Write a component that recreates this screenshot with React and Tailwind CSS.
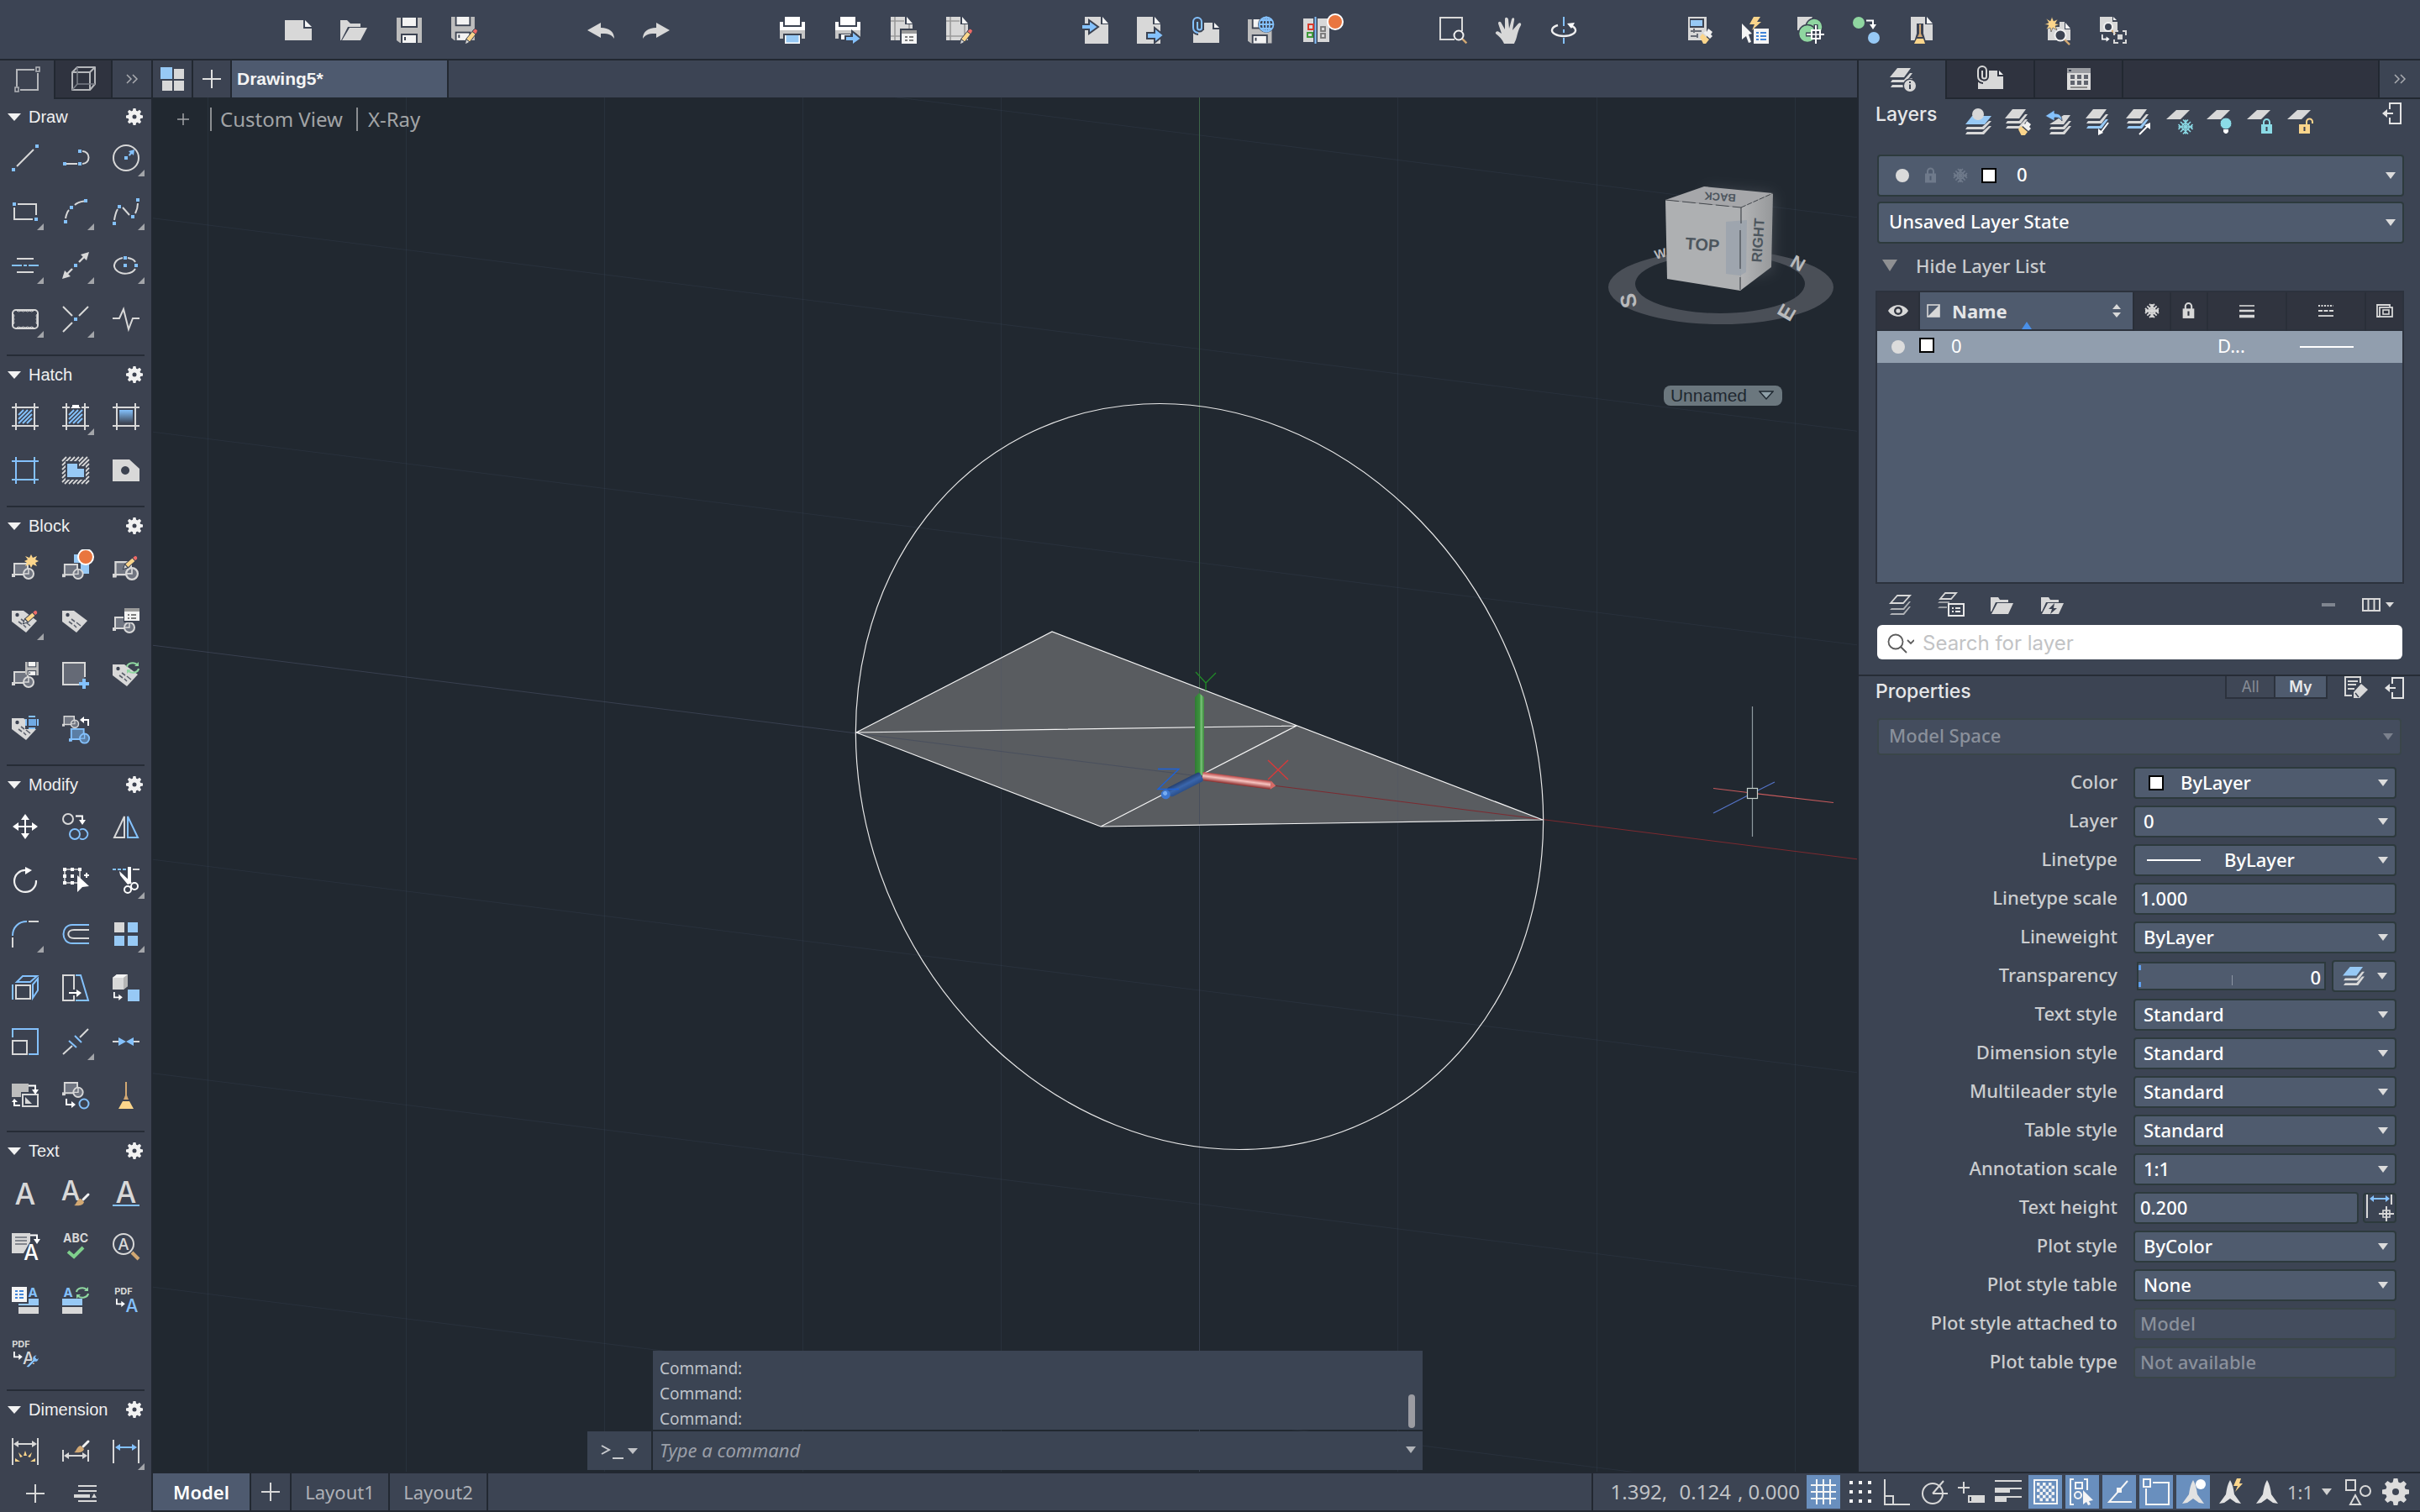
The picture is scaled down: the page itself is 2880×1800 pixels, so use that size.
import React from "react";

const G = "#d8d8d8";
const B = "#84c1fc";
const F = "#97c9f5";
const Y = "#fbd58b";
const P = "#3c4352";
const T = "#8bdbe6";
const GR = "#8fd6a0";

const sans = "font-['Noto_Sans','Open_Sans',sans-serif]";
const helv = "font-['Liberation_Sans',Arial,sans-serif]";
const inter = "font-['Inter',sans-serif]";

/* ---------- shared glyph parts ---------- */

function Svg({ size = "size-8", box = "0 0 32 32", children }) {
  return (
    <svg viewBox={box} className={`${size} shrink-0`} fill="none" aria-hidden="true">
      {children}
    </svg>
  );
}

function Gear({ size = "size-5", color = "#f2f2f2" }) {
  return (
    <svg viewBox="-12 -12 24 24" className={`${size} shrink-0`} aria-hidden="true">
      <circle r="6" fill="none" stroke={color} strokeWidth="6" />
      {[0, 45, 90, 135, 180, 225, 270, 315].map((a) => (
        <path key={a} d="M-2.6 -8L-1.8 -12H1.8L2.6 -8Z" fill={color} transform={`rotate(${a})`} />
      ))}
    </svg>
  );
}

function Caret({ className = "w-3 h-2", color = "#dcdcdc" }) {
  return (
    <svg viewBox="0 0 12 8" preserveAspectRatio="none" className={`${className} shrink-0`} aria-hidden="true">
      <path d="M0 0H12L6 8Z" fill={color} />
    </svg>
  );
}

const Pencil = ({ x = 0, y = 0, a = 0 }) => (
  <g transform={`translate(${x} ${y}) rotate(${a})`} stroke={P} strokeWidth="1">
    <path d="M9 2.5L11 0a2.6 2.6 0 0 1 4 3.2L13 6Z" fill="#ee6a66" />
    <path d="M9 2.5L13.2 5.8L6 15L1.6 11.6Z" fill={Y} />
    <path d="M1.6 11.6L6 15L0.5 18Z" fill={G} />
  </g>
);

const Brush = ({ x = 0, y = 0 }) => (
  <g transform={`translate(${x} ${y})`}>
    <path d="M10 0L15 4L13 7L15 9L12 12L4 5L7 3L8 4Z" fill="#f0f0f0" />
    <path d="M3 6L11 13L7 18L4 18L0 10Z" fill={Y} />
  </g>
);

const Tip = ({ x = 0, y = 0 }) => (
  <g transform={`translate(${x} ${y})`}>
    <path d="M17 0L11 6" stroke="#f2f2f2" strokeWidth="3" strokeLinecap="round" />
    <path d="M8 5L12 9C11 13 6 14 0 13C3 12 3 6 8 5Z" fill="#d2a873" />
  </g>
);

const Doc = ({ x = 0, y = 0, w = 28, h = 28 }) => (
  <g transform={`translate(${x} ${y})`}>
    <path d={`M0 0H${w - 9}V9H${w}V${h}H0Z`} fill={G} />
    <path d={`M${w - 7} 0L${w} 8H${w - 7}Z`} fill="#f5f5f5" />
  </g>
);

const Block = ({ x = 0, y = 0, c = G, f = "#707581", s = 1 }) => (
  <g transform={`translate(${x} ${y}) scale(${s})`} stroke={c} strokeWidth="2">
    <path d="M3 16V1H19V14H3" fill={f} />
    <rect x="0" y="13" width="4" height="4" fill={c} stroke="none" />
    <circle cx="20" cy="13" r="6" fill={f} />
    <path d="M20 7V13H14" strokeWidth="1.5" />
  </g>
);

const Tag = () => (
  <g>
    <path d="M0 3H14L30 15L17 29L0 16Z" fill={G} />
    <circle cx="6.500" cy="8" r="2.200" fill={P} />
    <path d="M11 13L15 16M17 17L22 21M8 16L12 19M14 20L17 23" stroke="#5a5f6b" strokeWidth="1.6" />
  </g>
);

const Cycle = ({ x = 0, y = 0 }) => (
  <g transform={`translate(${x} ${y})`} stroke={GR} strokeWidth="2.2">
    <path d="M1 6A7 5.500 0 0 1 13 3M15 8A7 5.500 0 0 1 3 11" />
    <path d="M15 0V5H10ZM1 14V9H6Z" fill={GR} stroke="none" />
  </g>
);

const Clip = ({ c = B, bg = P }) => (
  <g>
    <path d="M6 6V13a2.500 2.500 0 0 0 5 0V6a5 5 0 0 0-10 0V13a6 6 0 0 0 6 6" stroke={bg} strokeWidth="6" />
    <path d="M6 6V13a2.500 2.500 0 0 0 5 0V6a5 5 0 0 0-10 0V13a6 6 0 0 0 6 6" stroke={c} strokeWidth="2" />
  </g>
);

const Stack = ({ c2 = G, c3 = G, top = G, x = 0, y = 0 }) => (
  <g transform={`translate(${x} ${y})`}>
    <path d="M9 0H25L17 11H0Z" fill={top} />
    <path d="M24 6H27L19 17H1L3 14H17Z" fill={c2} />
    <path d="M24 12H27L19 23H1L3 20H17Z" fill={c3} />
  </g>
);

const Flake = ({ x, y, r = 8, c = T, w = 1.6 }) => (
  <g transform={`translate(${x} ${y})`} stroke={c} strokeWidth={w}>
    {[0, 90].map((a) => (
      <path key={a} d={`M0 ${-r}V${r}M-3 ${-r}L0 ${3 - r}L3 ${-r}M-3 ${r}L0 ${r - 3}L3 ${r}`} transform={`rotate(${a})`} />
    ))}
    {[45, 135].map((a) => (
      <path key={a} d={`M0 ${-r}V${r}`} transform={`rotate(${a})`} />
    ))}
    <circle r={r * 0.5} />
  </g>
);

const Lock = ({ x, y, c = T, open = false, k = P }) => (
  <g transform={`translate(${x} ${y})`}>
    <path d={open ? "M9 8V4a3.500 3.500 0 0 1 7 0V6" : "M3 8V4.500a3.500 3.500 0 0 1 7 0V8"} stroke={c} strokeWidth="2" />
    <rect x="0" y="7" width="13" height="11" fill={c} />
    <path d="M6.500 10V15" stroke={k} strokeWidth="2" />
  </g>
);

const Hatched = ({ c = B }) => (
  <path d="M8 14L14 8M8 19L19 8M8 24L24 8M13 24L24 13M18 24L24 18" stroke={c} strokeWidth="2" />
);

const Frame = ({ c = G, cut = false }) => (
  <path d={cut ? "M5 0V32M27 0V32M0 5H9M23 5H32M0 27H32" : "M5 0V32M27 0V32M0 5H32M0 27H32"} stroke={c} strokeWidth="2" />
);

const Sq = ({ p, s = 4, c = B }) => p.map(([x, y]) => <rect key={`${x}-${y}`} x={x - s / 2} y={y - s / 2} width={s} height={s} fill={c} />);

const Hook = ({ x = 0, y = 0, s = 1 }) => (
  <g transform={`translate(${x} ${y}) scale(${s})`}>
    <path d="M1 0V7H8" stroke="#fff" strokeWidth="2" />
    <path d="M7 3L12 7L7 11Z" fill="#fff" />
  </g>
);

const HookR = ({ x = 0, y = 0 }) => (
  <g transform={`translate(${x} ${y})`}>
    <path d="M0 1.500H8V7" stroke="#fff" strokeWidth="2" />
    <path d="M4 6H12L8 12Z" fill="#fff" />
  </g>
);

const Letter = ({ x, y, size = 24, c = G, bold = false, children }) => (
  <text x={x} y={y} fontSize={size} fill={c} fontWeight={bold ? 700 : 500} fontFamily="Inter, sans-serif" textAnchor="middle">
    {children}
  </text>
);

const Floppy = ({ x = 0, y = 0, s = 1 }) => (
  <g transform={`translate(${x} ${y}) scale(${s})`}>
    <path d="M0 0H30V30H4L0 27Z" fill="#bdbdbd" />
    <rect x="5" y="0" width="20" height="12" fill={P} />
    <rect x="7" y="0" width="16" height="10" fill="#f3f3f3" />
    <path d="M5 19H25V30H5Z" fill={P} />
    <rect x="7" y="21" width="16" height="9" fill="#f3f3f3" />
    <rect x="9" y="23" width="2" height="4" fill={P} />
  </g>
);

const Printer = () => (
  <g>
    <path d="M1 6H31V26H1Z" fill="#c6c6c6" />
    <path d="M1 6H31V16H1Z" fill="#fff" />
    <path d="M5 0H27V12H5Z" fill={P} />
    <path d="M7 0H25V10H7Z" fill="#fff" />
    <path d="M5 20H27V27H5Z" fill={P} />
  </g>
);

const Plot = () => (
  <g>
    <Doc x={1} y={0} w={26} />
    <path d="M1 5H17M1 23H27M6 0V28M23 9V28" stroke="#9a9a9a" strokeWidth="1.600" />
  </g>
);

const Glass = ({ x, y, r = 6 }) => (
  <g transform={`translate(${x} ${y})`}>
    <path d={`M${r * 0.7} ${r * 0.7}L${r * 1.7} ${r * 1.7}`} stroke="#d2a873" strokeWidth="2.400" />
    <circle r={r} fill={P} stroke="#f2f2f2" strokeWidth="2" />
  </g>
);

const Badge = ({ x, y, r = 9 }) => <circle cx={x} cy={y} r={r} fill="#e9763f" stroke="#fff" strokeWidth="2" />;

/* ---------- top toolbar ---------- */

const TOP = [
  [
    ["New", <g><path d="M0 4H22V14H32V28H0Z" fill={G} /><path d="M24 4L32 12H24Z" fill="#f5f5f5" /></g>],
    ["Open", <g><path d="M0 4H8L12 8H24V12H9L1 28H0Z" fill={G} /><path d="M11 13H32L24 28H2Z" fill={G} /></g>],
    ["Save", <Floppy x={1} y={1} />],
    ["Save As", <g><Floppy x={0} y={0} s={0.93} /><Pencil x={16} y={15} /></g>],
  ],
  [
    ["Undo", <path d="M0 16L16 7V13C26 13 32 18 32 26C28 20 23 20 16 20V25Z" fill={G} />],
    ["Redo", <path d="M32 16L16 7V13C6 13 0 18 0 26C4 20 9 20 16 20V25Z" fill={G} />],
  ],
  [
    ["Plot", <g><Printer /><rect x="7" y="22" width="18" height="10" fill="#fff" /><rect x="8.500" y="22" width="15" height="8.500" fill={F} /></g>],
    ["Batch Publish", <g><Printer /><path d="M8 21H19V27H8Z" fill="#fff" /><path d="M13 23H21V17L32 26L21 34V29H13Z" fill={B} stroke={P} strokeWidth="2" /></g>],
    ["Page Setup", <g><Plot /><rect x="12" y="14" width="20" height="18" fill={P} /><rect x="14" y="16" width="18" height="16" fill="#f5f5f5" /><rect x="14" y="16" width="18" height="4" fill="#9a9a9a" /><path d="M18 24H21M23 24H28M18 28H21M23 28H28" stroke="#555" strokeWidth="1.600" /></g>],
    ["Plot Styles", <g><Plot /><Pencil x={17} y={15} /></g>],
  ],
  [
    ["Import", <g><Doc x={4} y={0} h={32} /><path d="M0 9H9V4L20 12L9 20V15H0Z" fill={B} stroke={P} strokeWidth="2" /></g>],
    ["Export", <g><Doc x={0} y={0} h={32} /><path d="M12 19H21V13L32 22L21 31V26H12Z" fill={B} stroke={P} strokeWidth="2" /></g>],
    ["Attach", <g><path d="M1 16H14V7H24V15H32V31H1Z" fill={G} /><path d="M26 7L32 13H26Z" fill="#f5f5f5" /><Clip /></g>],
    ["Web Save", <g><Floppy x={0} y={3} s={0.95} /><circle cx="22" cy="9" r="10" fill={P} /><g stroke={B} strokeWidth="1.800"><circle cx="22" cy="9" r="8.500" /><ellipse cx="22" cy="9" rx="4" ry="8.500" /><path d="M22 0V18M13 9H31M15 4H29M15 14H29" /></g></g>],
    ["Compare", <g><path d="M0 2H12V30H0ZM17 2H31V30H17Z" fill={G} /><path d="M14.500 0V32" stroke={B} strokeWidth="2" /><rect x="6" y="9" width="6" height="6" stroke="#d93a2b" strokeWidth="2" /><rect x="5" y="19" width="6" height="5" stroke="#3e9a3a" strokeWidth="2" /><rect x="21" y="12" width="5" height="5" stroke="#777" strokeWidth="1.800" /><rect x="21" y="20" width="5" height="5" stroke="#777" strokeWidth="1.800" /><Badge x={38} y={6} r={9} /></g>],
  ],
  [
    ["Zoom Window", <g><path d="M18 27H1V1H27V17" stroke={G} strokeWidth="2" /><Glass x={23} y={22} r={5.5} /></g>],
    ["Pan", <path d="M11 32C9 27 5 23 1 20C0 18 3 16 5 18L8 20L4 8C4 5 7 5 8 8L12 15V3C12 0 15 0 16 3L17 14L20 3C21 0 24 1 23 4L21 16L28 8C30 6 32 8 31 10C28 15 27 20 26 24C25 28 24 29 23 32Z" fill={G} />],
    ["Orbit", <g><path d="M16 0V11M16 15V19M16 25V32" stroke={B} strokeWidth="2" /><path d="M9 10A14 7 0 1 0 23 10" stroke="#f0f0f0" strokeWidth="2.400" /><path d="M20 8L29 7L25 14Z" fill="#fff" /></g>],
  ],
  [
    ["Quick Properties", <g><rect x="2" y="0" width="22" height="28" fill={G} /><rect x="4" y="2" width="17" height="11" fill={P} /><rect x="5" y="4" width="14" height="7" fill={F} /><path d="M5 17H18M5 23H14M9 14V19M13 20V25" stroke="#666b76" strokeWidth="2" /><Brush x={16} y={14} /></g>],
    ["Action Recorder", <g><path d="M14 0H22L18 6H23L12 16L15 9H9Z" fill={Y} /><path d="M0 8L12 20L8 21L11 30L8 31L5 23L0 27Z" fill="#f5f5f5" /><rect x="14" y="14" width="18" height="18" fill="#f5f5f5" /><path d="M17 19H20M22 19H29M17 23H20M22 23H29M17 27H20M22 27H29" stroke="#4285d9" strokeWidth="2" /></g>],
    ["Point Style", <g><path d="M0 0H18L10 16H0Z" fill={G} /><circle cx="20" cy="12" r="10" fill={GR} stroke={P} strokeWidth="1.500" /><circle cx="12" cy="20" r="10.500" fill={GR} stroke={P} strokeWidth="1.500" /><path d="M22 9V32M10 21H32" stroke={P} strokeWidth="5" /><path d="M22 10V32M11 21H32" stroke="#fff" strokeWidth="2" /><rect x="17" y="16" width="10" height="10" fill={P} stroke="#fff" strokeWidth="2" /><path d="M22 16V27M16 21H28" stroke="#fff" strokeWidth="1.600" /></g>],
    ["Match", <g><circle cx="7" cy="7" r="7" fill={GR} /><HookR x={16} y={3} /><circle cx="25" cy="25" r="7" fill={F} /></g>],
    ["Clean", <g><Doc x={3} y={0} w={26} /><path d="M10 8V20L6 33H22L18 20V8Z" fill={P} /><path d="M13 9H15V20L17 24H11L13 20Z" fill="#d2a873" /><path d="M10 26H18L20 32H7Z" fill={Y} /></g>],
  ],
  [
    ["Find New", <g><path d="M4 12H18V6H24V15H31V28H4Z" fill={G} /><path d="M25 7L31 14H25Z" fill="#f5f5f5" /><Glass x={19} y={22} r={6.5} /><path d="M9 0L11 5L16 3L13 8L18 9L13 11L15 16L10 13L8 18L7 13L2 15L5 10L0 9L5 7L2 2L7 5Z" fill={Y} stroke={P} strokeWidth="0.600" /></g>],
    ["Find Replace", <g><path d="M0 0H15V6H21V18H0Z" fill={G} /><path d="M16 0L20 4H16Z" fill="#f5f5f5" /><Glass x={10} y={12} r={5} /><Hook x={2} y={21} s={0.8} /><path d="M17 22V17H22M27 17H31V22M31 27V31H27M22 31H17V27" stroke={G} strokeWidth="2" /><rect x="21" y="21" width="6" height="6" fill={G} /></g>],
  ],
];

/* ---------- left palette ---------- */

const LEFT = [
  {
    title: "Draw",
    items: [
      ["Line", <g><path d="M6 26L26 6" stroke={G} strokeWidth="2" /><Sq p={[[2, 30], [30, 2]]} /></g>],
      ["Polyline", <g><path d="M5 23H18M24 8C34 8 34 23 24 23" stroke={G} strokeWidth="2" /><Sq p={[[3, 23], [21, 23], [21, 8]]} /></g>],
      ["Circle", <g><circle cx="16" cy="16" r="15" stroke={G} strokeWidth="2" /><Sq p={[[16, 16]]} /><path d="M26 6L25 13L23 11L20 14L19 12L21 10L19 8Z" fill={B} /></g>, 1],
      ["Rectangle", <g><path d="M7 7H29V20M25 25H3V11" stroke={G} strokeWidth="2" /><Sq p={[[3, 7], [29, 25]]} /></g>, 1],
      ["Arc", <g><path d="M4 24C5 19 6 16 8 14M15 8C18 5 22 4 26 3.500" stroke={G} strokeWidth="2" /><Sq p={[[4, 28], [11, 11], [28, 3]]} /></g>, 1],
      ["Spline", <g><path d="M2 26C3 20 4 16 6 13M12 11L20 20M27 18C29 14 30 10 30 6" stroke={G} strokeWidth="2" /><Sq p={[[2, 30], [8, 10], [24, 22], [30, 2]]} /></g>, 1],
      ["Construction Lines", <g><path d="M6 8H26M6 24H26" stroke={G} strokeWidth="2" /><path d="M0 16H12M14 16H18M20 16H32" stroke={B} strokeWidth="2" /></g>, 1],
      ["Ray", <g><path d="M5 27L12 20M20 12L27 5" stroke={G} strokeWidth="2.400" /><path d="M0 32L3 22L10 29ZM32 0L22 3L29 10Z" fill={G} /><Sq p={[[16, 16]]} /></g>, 1],
      ["Ellipse", <g><path d="M12 7A13 9.500 0 1 0 27 20M18 7Q25 8 27 12" stroke={G} strokeWidth="2" /><Sq p={[[15, 7], [15, 16], [28, 16]]} /></g>, 1],
      ["Revision Cloud", <g><rect x="1" y="5" width="30" height="22" rx="4" stroke={G} strokeWidth="2" /><path d="M6 6q2 2 5 0q3 2 5 0q3 2 5 0q3 2 5 0M6 26q2-2 5 0q3-2 5 0q3-2 5 0q3-2 5 0M2 10q2 2 0 4q2 2 0 4q2 2 0 4M30 10q-2 2 0 4q-2 2 0 4q-2 2 0 4" stroke={G} strokeWidth="1" /></g>, 1],
      ["Break Lines", <g><path d="M1 1L12 12M20 12L31 1M1 31L12 20" stroke={G} strokeWidth="2" /><Sq p={[[16, 16]]} /></g>, 1],
      ["Break Symbol", <path d="M0 15H8L13 4L19 28L24 15H32" stroke={G} strokeWidth="2" />],
    ],
  },
  {
    title: "Hatch",
    items: [
      ["Hatch", <g><Frame /><Hatched /></g>],
      ["Super Hatch", <g><Frame cut /><Hatched /><path d="M10 6L12 4V2H20V4L22 6Z" fill="#fff" /></g>, 1],
      ["Gradient", <g><defs><linearGradient id="fade" x1="0" y1="0" x2="0" y2="1"><stop offset="0" stopColor={B} /><stop offset="1" stopColor={P} /></linearGradient></defs><Frame /><rect x="8" y="8" width="16" height="16" fill="url(#fade)" /></g>],
      ["Boundary", <Frame c={B} />],
      ["Region", <g><path d="M0 5L5 0M0 10L10 0M0 15L15 0M0 20L20 0M0 25L25 0M0 30L30 0M3 32L32 3M8 32L32 8M13 32L32 13M18 32L32 18M23 32L32 23M28 32L32 28" stroke={G} strokeWidth="1.800" /><path d="M4 5H20V11H28V27H4Z" fill={P} /><path d="M6 8H18V14H26V24H6Z" fill={F} /></g>],
      ["Wipeout", <path fillRule="evenodd" d="M0 3H20L32 14V29H0ZM15 11a5 5 0 1 0 0.100 0Z" fill={G} />],
    ],
  },
  {
    title: "Block",
    items: [
      ["Create Block", <g><Block x={0} y={10} /><path d="M23 0L25 4L30 2L28 6L32 8L28 10L30 14L25 12L23 16L21 12L16 14L18 10L15 8L19 6L16 2L21 4Z" fill={Y} /></g>],
      ["Insert Block", <g><path d="M14 0H24V8H32V23H22V10H14Z" fill={F} /><Block x={0} y={11} s={0.95} /><Badge x={28} y={3} r={9} /></g>],
      ["Edit Block", <g><Block x={0} y={8} s={1.15} /><Pencil x={15} y={0} a={10} /></g>],
      ["Edit Attributes", <g><Tag /><Pencil x={16} y={1} a={10} /></g>, 1],
      ["Define Attributes", <Tag />],
      ["Block Attribute Manager", <g><Block x={0} y={10} /><rect x="13" y="0" width="19" height="17" fill={P} /><rect x="14" y="0" width="18" height="15" fill="#f3f3f3" /><rect x="14" y="0" width="18" height="4" fill="#9a9a9a" /><path d="M18 8H20M22 8H28M18 12H20M22 12H28" stroke="#555" strokeWidth="1.600" /></g>],
      ["Write Block", <g><Block x={0} y={11} /><Floppy x={16} y={0} s={0.53} /></g>],
      ["Set Base Point", <g><path d="M23 27H1V1H27V18" fill="#656a76" /><path d="M20 27H1V1H27V18" stroke={G} strokeWidth="2" /><path d="M24 20H28V24H32V28H28V32H24V28H20V24H24Z" fill={B} /></g>],
      ["Synchronize Attributes", <g><Tag /><Cycle x={16} y={0} /></g>],
      ["Retain Attributes", <g><Tag /><rect x="16" y="0" width="16" height="16" fill={P} /><rect x="20" y="4" width="9" height="8" fill="#6fa9e3" /><path d="M20 1H28M20 15H28M17 4V12M31 4V12" stroke={B} strokeWidth="2" /></g>],
      ["Replace Block", <g><Block x={0} y={0} s={0.75} /><Block x={8} y={15} s={0.93} c={B} f="#5b7ea5" /><path d="M31 12V5H25" stroke="#fff" strokeWidth="2" /><path d="M26 1L21 5L26 9Z" fill="#fff" /></g>],
    ],
  },
  {
    title: "Modify",
    items: [
      ["Move", <g fill="#fff"><path d="M15 5H17V15H27V17H17V27H15V17H5V15H15Z" /><path d="M16 1L21 8H11ZM16 31L21 24H11ZM1 16L8 11V21ZM31 16L24 11V21Z" /></g>],
      ["Copy", <g strokeWidth="2"><circle cx="7" cy="7" r="6" stroke={G} /><HookR x={16} y={2} /><circle cx="15" cy="25" r="6" stroke={B} /><path d="M21 20A6 6 0 1 1 21 30" stroke={B} /></g>],
      ["Mirror", <g strokeWidth="2"><path d="M14 4V29H2Z" stroke={G} /><path d="M18 4V29H30Z" stroke={B} /></g>],
      ["Rotate", <g><path d="M29 16A13 13 0 1 1 17 4" stroke="#f0f0f0" strokeWidth="2.200" /><path d="M16 0L24 4L16 9Z" fill="#fff" /></g>],
      ["Select Similar", <g><path d="M3 3H21V19H3Z" stroke={G} strokeWidth="1.600" /><Sq p={[[3, 3], [12, 3], [21, 3], [3, 11], [12, 11], [3, 19], [12, 19]]} c="#fff" /><path d="M18 10L32 23L24 24L18 30Z" fill="#fff" /><path d="M29 7V13M26 10H32" stroke="#fff" strokeWidth="2" /></g>],
      ["Trim", <g><path d="M0 3H4M6 3H10M12 3H16" stroke={B} strokeWidth="2" /><path d="M24 3H32" stroke={G} strokeWidth="2" /><path d="M18 0H22V20H18Z" fill="#fff" /><path d="M8 5L9 10L18 21L23 19Z" fill="#fff" /><circle cx="18" cy="27" r="4" stroke="#fff" strokeWidth="2" /><circle cx="26" cy="23" r="4" stroke="#fff" strokeWidth="2" /></g>, 1],
      ["Fillet", <g strokeWidth="2"><path d="M1 18C1 8 8 1 18 1" stroke={B} /><path d="M20 1H32M1 20V32" stroke={G} /></g>, 1],
      ["Offset", <g strokeWidth="2"><path d="M32 5H12C-2 5 -2 27 12 27H32" stroke={B} /><path d="M32 11H14C5 11 5 21 14 21H32" stroke={G} /></g>],
      ["Array", <g><rect x="2" y="2" width="12" height="12" fill={G} /><rect x="18" y="2" width="12" height="12" fill={F} /><rect x="2" y="18" width="12" height="12" fill={F} /><rect x="18" y="18" width="12" height="12" fill={F} /></g>, 1],
      ["Stretch", <g strokeWidth="2"><path d="M5 13H22V29H5Z" stroke={G} /><path d="M1 12V30M6 9L13 2H30L22 9ZM25 12L31 5V19L25 28Z" stroke={B} /></g>],
      ["Scale Side", <g strokeWidth="2"><path d="M14 18V1H1V31H14V25" stroke={G} /><path d="M16 1H22L31 31H16" stroke={B} /><path d="M8 22H18" stroke="#fff" /><path d="M17 18L23 22L17 27Z" fill="#fff" /></g>],
      ["Flatten", <g><path d="M0 4L5 0H18V14L13 18H0Z" fill={G} /><path d="M0 4L5 0H18L13 4Z" fill="#f3f3f3" /><path d="M13 4L18 0V14L13 18Z" fill="#b5b5b5" /><Hook x={1} y={21} s={0.9} /><rect x="18" y="18" width="14" height="14" fill={F} /></g>],
      ["Scale", <g strokeWidth="2"><path d="M1 11V1H31V31H20" stroke={B} /><path d="M1 15H18V31H1Z" stroke={G} /></g>],
      ["Break", <g strokeWidth="2"><path d="M1 31L12 21M21 11L31 1" stroke={G} /><path d="M8 15L17 23M15 9L23 17" stroke={B} /></g>, 1],
      ["Join", <g><path d="M0 16H7M25 16H32" stroke={G} strokeWidth="2" /><path d="M7 11L16 16L7 21ZM25 11L16 16L25 21Z" fill={B} /></g>],
      ["Replace", <g><rect x="0" y="2" width="20" height="16" fill="#bdbdbd" /><rect x="11" y="12" width="21" height="20" fill={P} /><rect x="13" y="15" width="18" height="14" stroke={G} strokeWidth="2" /><path d="M16 18V26H24Z" fill={G} /><HookR x={20} y={3} /><path d="M3 22V28H10" stroke="#fff" strokeWidth="2" /><path d="M0 24L3 20L7 24Z" fill="#fff" /></g>],
      ["Change Block", <g><Block x={0} y={0} s={0.95} /><Hook x={4} y={20} /><circle cx="26" cy="26" r="5.500" stroke={B} strokeWidth="2" /></g>],
      ["Explode", <g><path d="M15 0H17V16L19 21H13L15 16Z" fill="#d2a873" /><path d="M12 23H20L25 32H7Z" fill={Y} /></g>],
    ],
  },
  {
    title: "Text",
    items: [
      ["Multiline Text", <Letter x={16} y={30} size={35}>A</Letter>],
      ["Text Style", <g><Letter x={10} y={25} size={32}>A</Letter><Tip x={14} y={18} /></g>],
      ["Single Line Text", <g><Letter x={16} y={28} size={35}>A</Letter><path d="M0 31H32" stroke={B} strokeWidth="2" /></g>],
      ["Text to Mtext", <g><path d="M0 0H22V10L14 24H0Z" fill={G} /><path d="M4 5H18M4 9H18M4 13H18" stroke="#666b76" strokeWidth="1.600" /><HookR x={22} y={1} /><Letter x={23} y={32} size={25} c="#fff">A</Letter></g>],
      ["Spell Check", <g><Letter x={16} y={11} size={14} bold>ABC</Letter><path d="M7 22L14 28L25 17" stroke="#7fd08c" strokeWidth="4" /></g>],
      ["Find Text", <g><path d="M23 23L31 31" stroke="#d2a873" strokeWidth="4" /><circle cx="13" cy="13" r="12" fill={P} stroke={G} strokeWidth="2" /><Letter x={13} y={20} size={19}>A</Letter></g>],
      ["Text Layer", <g><rect x="8" y="24" width="24" height="8" fill={G} /><rect x="8" y="14" width="24" height="8" fill={F} /><rect x="0" y="0" width="20" height="20" fill={P} /><rect x="0" y="0" width="18" height="18" fill="#f5f5f5" /><path d="M4 5H7M9 5H14M4 9H7M9 9H14M4 13H7M9 13H14" stroke="#4285d9" strokeWidth="1.800" /><Letter x={25} y={12} size={15} c={B} bold>A</Letter></g>],
      ["Update Field", <g><rect x="0" y="24" width="24" height="8" fill={G} /><rect x="0" y="14" width="24" height="8" fill={F} /><Letter x={7} y={12} size={15} c={B} bold>A</Letter><Cycle x={16} y={0} /></g>],
      ["PDF to Text", <g><Letter x={13} y={9} size={11} bold>PDF</Letter><Hook x={4} y={14} s={0.9} /><Letter x={23} y={30} size={21} c={B}>A</Letter></g>],
      ["PDF Text Settings", <g><Letter x={11} y={8} size={11} bold>PDF</Letter><Hook x={2} y={13} s={0.9} /><Letter x={20} y={28} size={20}>A</Letter><path d="M17 31L25 23C24 19 27 17 30 17L28 20L30 22L32 20C32 24 30 26 27 25L20 32Z" fill={B} stroke={P} strokeWidth="0.800" /></g>],
    ],
  },
  {
    title: "Dimension",
    items: [
      ["Dimension", <g><path d="M1 0V32M31 0V32M4 7H28" stroke={G} strokeWidth="2" /><path d="M2 7L8 3V11ZM30 7L24 3V11Z" fill={G} /><path d="M16 15L18 21H14ZM8 17L13 22L10 23ZM24 17L19 22L22 23ZM4 24L10 28H4ZM28 24L22 28H28Z" fill={Y} /></g>],
      ["Dimension Style", <g><path d="M1 14V28M31 14V28M4 21H28" stroke={G} strokeWidth="2" /><path d="M2 21L8 17V25ZM30 21L24 17V25Z" fill={G} /><Tip x={14} y={4} /></g>],
      ["Linear Dimension", <g><path d="M1 2V30M31 2V30" stroke={G} strokeWidth="2" /><path d="M5 11H27" stroke={B} strokeWidth="2" /><path d="M3 11L9 7V15ZM29 11L23 7V15Z" fill={B} /></g>, 1],
    ],
  },
];

function PaletteSection({ title, items, first }) {
  return (
    <section className="flex flex-col">
      <div className={`flex items-center pl-2 pr-2.5 ${first ? "h-[38px] pt-1" : "h-10 pt-1"}`}>
        <button aria-label={`Collapse ${title}`} className="flex w-[18px] justify-center">
          <Caret className="w-4 h-[9px]" color="#f2f2f2" />
        </button>
        <h2 className="ml-2 flex-1 text-[20px] leading-6 text-[#f0f0f0]">{title}</h2>
        <button aria-label={`${title} settings`}>
          <Gear />
        </button>
      </div>
      <div className="grid grid-cols-3">
        {items.map(([name, art, more]) => (
          <button key={name} aria-label={name} className="flex h-16 items-center justify-center">
            <Svg size="size-11" box="-6 -6 44 44">
              {art}
              {more ? <path d="M38 30V38H30Z" fill="#a3a5a9" /> : null}
            </Svg>
          </button>
        ))}
      </div>
      <div className="mx-2 mt-2.5 border-t-2 border-[#262c36]" />
    </section>
  );
}

function Sidebar() {
  return (
    <aside className={`flex w-[180px] shrink-0 flex-col bg-[#3c4250] ${helv}`}>
      <div className="flex h-[46px] shrink-0 gap-0.5 bg-[#222831]">
        <button aria-label="Drafting tools" className="flex w-16 items-center justify-center bg-[#3c4250]">
          <Svg>
            <path d="M25 4H4V24M8 28H29V8" stroke="#b4b6ba" strokeWidth="2" />
            <rect x="27" y="1" width="4" height="5" stroke="#b4b6ba" strokeWidth="1.500" />
            <rect x="2" y="25" width="4" height="5" stroke="#b4b6ba" strokeWidth="1.500" />
          </Svg>
        </button>
        <button aria-label="Modeling tools" className="flex h-11 w-[66px] items-center justify-center bg-[#2f333f]">
          <Svg>
            <path d="M3 8L9 2H30V22L24 29H3ZM3 8H24V29M24 8L30 2" stroke="#b4b6ba" strokeWidth="2" strokeLinejoin="round" />
            <path d="M9 2V22H30M9 22L3 29" stroke="#797d86" strokeWidth="1.600" />
          </Svg>
        </button>
        <button aria-label="More tool sets" className="flex h-11 flex-1 items-center justify-center bg-[#3c4352]">
          <Svg size="size-4" box="0 0 16 16"><path d="M2 3L7 8L2 13M9 3L14 8L9 13" stroke="#a9abb0" strokeWidth="1.500" /></Svg>
        </button>
      </div>
      <div className="min-h-0 flex-1 overflow-hidden">
        {LEFT.map((s, i) => (
          <PaletteSection key={s.title} title={s.title} items={s.items} first={i === 0} />
        ))}
      </div>
      <div className="flex h-11 shrink-0 items-center gap-7 bg-[#3c4250] pl-[26px]">
        <button aria-label="Add tool group"><Svg><path d="M16 5V27M5 16H27" stroke={G} strokeWidth="2" /></Svg></button>
        <button aria-label="Organize tool groups">
          <Svg><path d="M7 7H29M7 13H29M7 25H29" stroke={G} strokeWidth="2" /><path d="M2 19H21" stroke={G} strokeWidth="4" /><path d="M23 21L26 16L29 21Z" fill={G} /></Svg>
        </button>
      </div>
    </aside>
  );
}

function TopBar() {
  return (
    <header className="flex h-[70px] shrink-0 items-center justify-center gap-[130px] bg-[#3c4454] pt-0.5 pr-[10px]">
      {TOP.map((group) => (
        <div key={group[0][0]} className="flex gap-[34px]">
          {group.map(([name, art]) => (
            <button key={name} aria-label={name} className="size-8">
              <svg viewBox="0 0 32 32" className="size-8 overflow-visible" fill="none">{art}</svg>
            </button>
          ))}
        </div>
      ))}
    </header>
  );
}

function DocTabs() {
  return (
    <nav className={`flex h-11 shrink-0 gap-0.5 ${helv}`}>
      <button aria-label="Start" className="flex w-[46px] items-center justify-center bg-[#3c4352]">
        <Svg><rect x="2" y="2" width="14" height="14" fill={F} /><rect x="18" y="4" width="12" height="12" fill={G} /><rect x="4" y="18" width="12" height="12" fill={G} /><rect x="18" y="18" width="12" height="12" fill={G} /></Svg>
      </button>
      <button aria-label="New drawing" className="flex w-11 items-center justify-center bg-[#3c4352]">
        <Svg><path d="M16 5V27M5 16H27" stroke="#e0e0e0" strokeWidth="2" /></Svg>
      </button>
      <button className="w-64 bg-[#4e5a6f] pl-1.5 text-left text-[21px] font-bold text-[#f4f4f4]">Drawing5*</button>
      <div className="flex-1 bg-[#3c4454]" />
    </nav>
  );
}

/* ---------- drawing area ---------- */

const GRID_X = [247, 483, 719, 955, 1191, 1663, 1900, 2136];
const GRID_K = [-3, -2, -1, 1, 2, 3];

function Scene() {
  return (
    <svg viewBox="180 116 2032 1636" preserveAspectRatio="xMidYMid slice" className="absolute inset-0 size-full" fill="none" aria-label="Model space drawing">
      <defs>
        <linearGradient id="gx" x1="0" y1="0" x2="1" y2="0"><stop offset="0" stopColor="#2f7d33" /><stop offset="0.550" stopColor="#3e933f" /><stop offset="0.650" stopColor="#7cc57c" /><stop offset="1" stopColor="#3b8a3b" /></linearGradient>
        <linearGradient id="rx" x1="0" y1="0" x2="0" y2="1"><stop offset="0" stopColor="#b94545" /><stop offset="0.450" stopColor="#f6c4c0" /><stop offset="1" stopColor="#8d2c2c" /></linearGradient>
        <linearGradient id="bx" x1="0" y1="0" x2="0" y2="1"><stop offset="0" stopColor="#2b4f8a" /><stop offset="0.500" stopColor="#3a66ac" /><stop offset="1" stopColor="#243f70" /></linearGradient>
      </defs>
      <path d="M1019 872L1252 752L1836 976L1310 984Z" fill="#595c60" />
      <g stroke="#46506a" strokeOpacity="0.220">
        {GRID_X.map((x) => <path key={x} d={`M${x}.5 116V1752`} />)}
        {GRID_K.map((k) => <path key={k} d={`M180 ${768.5 + 254.5 * k}L2212 ${1022.5 + 254.5 * k}`} />)}
      </g>
      <path d="M1427.500 924V1752M180 768L1427 924" stroke="#434a5c" strokeOpacity="0.700" />
      <path d="M1427.500 116V830" stroke="#3d6649" />
      <path d="M1427 924L2212 1023" stroke="#7d2a30" />
      <ellipse cx="1427.500" cy="924.500" rx="456.300" ry="395.300" transform="rotate(62.500 1427.500 924.500)" stroke="#e8e8e8" strokeWidth="1.200" />
      <path d="M1019 872L1252 752L1836 976L1310 984ZM1019 872L1543 864L1310 984" stroke="#f4f4f4" strokeWidth="1.200" />
      <path d="M1422 830L1427 825L1433 830V923H1422Z" fill="url(#gx)" />
      <g transform="translate(1431 924) rotate(7.500)"><rect x="0" y="-5" width="82" height="10" fill="url(#rx)" /><path d="M82 -5L88 0L82 5Z" fill="#d76a66" /></g>
      <g transform="translate(1430 924) rotate(153)"><rect x="0" y="-6" width="44" height="12" rx="3" fill="url(#bx)" /><circle cx="48" cy="0" r="5.500" fill="#3d78d0" /><circle cx="48" cy="1.500" r="2.500" fill="#78adf0" /></g>
      <path d="M1423 800L1435 813L1447 801M1435 813V822" stroke="#218a27" strokeWidth="1.300" />
      <path d="M1509 905L1533 928M1533 905L1509 928" stroke="#d83a3a" strokeWidth="1.400" />
      <path d="M1378 915.500H1403L1378 939.500H1403" stroke="#1d62d8" strokeWidth="1.400" />
      <path d="M2085.500 841V939M2085.500 950V996" stroke="#8f9aa0" strokeWidth="1.200" />
      <path d="M2039 938.500L2080 943.500M2091 944.800L2182 955.500" stroke="#c65a5c" strokeWidth="1.200" />
      <path d="M2039 968L2080 947M2091 941.500L2112 931" stroke="#5574c8" strokeWidth="1.200" />
      <rect x="2079.500" y="938.500" width="12" height="12" stroke="#c4cfc9" strokeWidth="1.200" />
    </svg>
  );
}

function ViewCube() {
  const face = { fontFamily: "Liberation Sans, Arial, sans-serif", fontWeight: 700, textAnchor: "middle" };
  return (
    <svg viewBox="0 0 280 180" className="absolute right-[22px] top-[92px] h-[180px] w-[280px]" aria-label="View cube">
      <defs>
        <linearGradient id="cr" x1="0" y1="0" x2="1" y2="0"><stop offset="0" stopColor="#b4b5b7" /><stop offset="1" stopColor="#96989a" /></linearGradient>
        <filter id="glow" x="-30%" y="-30%" width="160%" height="160%"><feGaussianBlur stdDeviation="9" /></filter>
      </defs>
      <path d="M120 18L202 24L200 114L162 120Z" fill="#8a8f96" opacity="0.350" filter="url(#glow)" />
      <path fillRule="evenodd" fill="#4a4f57" d="M6 134a134 44 0 1 0 268 0a134 44 0 1 0 -268 0ZM38 130a101 35 0 1 1 202 0a101 35 0 1 1 -202 0Z" />
      <g {...face} fill="#b9babc">
        <text x="30" y="159" fontSize="26" transform="rotate(-100 30 150)">S</text>
        <text x="218" y="173" fontSize="26" transform="rotate(-60 218 164)">E</text>
        <text x="232" y="113" fontSize="22" transform="rotate(30 232 105)">N</text>
        <text x="68" y="99" fontSize="15" transform="rotate(-15 68 94)">W</text>
      </g>
      <g transform="translate(12 0)">
        <path d="M62 30L108 14L190 22L152 39Z" fill="#a6a7aa" />
        <path d="M62 30L152 39L151 138L64 124Z" fill="#aeb0b2" />
        <path d="M152 39L190 22L188 110L151 138Z" fill="url(#cr)" />
        <path d="M134 56L159 54L158 116L151 120L134 118Z" fill="#9aa2ad" opacity="0.800" />
        <path d="M62 30L152 39" stroke="#44484d" strokeWidth="1" strokeDasharray="16 4" />
        <path d="M152 39L190 22" stroke="#44484d" strokeWidth="1" strokeDasharray="6 2" />
        <path d="M152 39V58M151 66V112M151 122V137" stroke="#33373c" strokeWidth="1" />
        <g {...face} fill="#4d565e">
          <text x="106" y="90" fontSize="20" transform="rotate(4 106 83)">TOP</text>
          <text x="172" y="84" fontSize="17" transform="rotate(-86 172 78)">RIGHT</text>
          <text x="127" y="30" fontSize="13" transform="rotate(184 127 26)">BACK</text>
        </g>
      </g>
    </svg>
  );
}

function CommandLine() {
  return (
    <div className={`absolute inset-x-0 bottom-0.5 flex justify-center ${sans}`}>
      <div className="flex w-[994px] items-end gap-0.5">
        <button aria-label="Recent commands" className="flex h-[46px] w-[76px] items-center justify-center gap-1 bg-[#3b4453]">
          <Svg size="w-7 h-6" box="0 0 28 24"><path d="M1 6L10 11L1 16M14 21H27" stroke="#c9cbcf" strokeWidth="2" /></Svg>
          <Caret color="#c0c2c6" className="w-3 h-[7px]" />
        </button>
        <div className="flex flex-1 flex-col gap-0.5">
          <div className="flex h-[94px] justify-between bg-[#3b4453] pl-2 pr-[9px] pt-1.5">
            <div className="text-[19px] leading-[30px] text-[#bfc3ca]">
              <p>Command:</p>
              <p>Command:</p>
              <p>Command:</p>
            </div>
            <div className="mb-0.5 h-10 w-2 self-end rounded-full bg-[#9b9ca2]" />
          </div>
          <label className="flex h-[46px] items-center bg-[#3b4453] px-2 pb-0.5">
            <input aria-label="Command" placeholder="Type a command" className="min-w-0 flex-1 bg-transparent text-[22px] italic text-white outline-none placeholder:text-[#9a9fa8]" />
            <Caret color="#b0b3b8" />
          </label>
        </div>
      </div>
    </div>
  );
}

function Canvas() {
  return (
    <main className="relative min-h-0 flex-1 overflow-hidden bg-[#212830]">
      <Scene />
      <div className={`relative flex h-[52px] items-center pl-7 text-[24px] text-[#a2a4a6] ${sans}`}>
        <button aria-label="Viewport controls" className="flex">
          <Svg size="size-4" box="0 0 16 16"><path d="M8 1V15M1 8H15" stroke="#a2a4a6" strokeWidth="1.500" /></Svg>
        </button>
        <span className="ml-6 h-7 w-0.5 bg-[#8b8e91]" />
        <button className="ml-2.5">Custom View</button>
        <span className="ml-4 h-7 w-0.5 bg-[#8b8e91]" />
        <button className="ml-3">X-Ray</button>
      </div>
      <ViewCube />
      <button className={`absolute right-[89px] top-[343px] flex h-6 items-center gap-3.5 rounded-lg bg-[#6b777e] pl-2 pr-2.5 text-[21px] leading-6 text-[#1f2831] ${helv}`}>
        Unnamed
        <Svg size="w-[18px] h-3" box="0 0 18 12"><path d="M1 1H17L9 10Z" fill="#8fa0a8" stroke="#1f2831" strokeWidth="1.400" /></Svg>
      </button>
      <CommandLine />
    </main>
  );
}

/* ---------- right panel ---------- */

const field = "rounded border-2 border-[#2d3a3d] bg-[#4f5b6e] text-white";

function Select({ id, label, value, disabled, height = "h-[38px]", pad = "pl-3", children }) {
  return (
    <div className={`relative flex w-full items-center ${height} ${disabled ? "rounded border-2 border-[#3a4549] bg-[#444d5e] text-[#8a909b]" : field}`}>
      {children}
      <select id={id} aria-label={label} disabled={disabled} className={`h-full min-w-0 flex-1 appearance-none bg-transparent pb-1 text-[22px] font-medium outline-none disabled:opacity-100 ${pad}`}>
        <option>{value}</option>
      </select>
      <span className="pointer-events-none absolute right-2"><Caret color={disabled ? "#7b818d" : "#dcdcdc"} /></span>
    </div>
  );
}

const Swatch = () => <span className="block size-[18px] shrink-0 border-2 border-black bg-white" />;

const LAYER_TOOLS = [
  ["Make Current", <g><path d="M9 9H32L24 19H1Z" fill={F} /><circle cx="16" cy="7" r="7" fill={G} /><path d="M29 15H32L23 25H1L3 22H21ZM29 21H32L23 31H1L3 28H21Z" fill={G} /></g>],
  ["Match Layer", <g><Stack y={1} /><Brush x={16} y={15} /></g>],
  ["Previous Layer", <g><path d="M22 8H30L22 19H5Z" fill={G} /><path d="M28 15H31L23 25H5L7 22H21ZM28 21H31L23 31H5L7 28H21Z" fill={G} /><path d="M0 9L11 2V6C18 6 20 10 20 15C17 11 15 11 11 11V15Z" fill={B} stroke={P} strokeWidth="0.800" /></g>],
  ["Isolate", <g><Stack y={1} c3={F} /><path d="M27 17L18 29" stroke="#fff" strokeWidth="2" /><path d="M15 32V24L21 29Z" fill="#fff" /></g>],
  ["Unisolate", <g><Stack y={1} c3={F} /><path d="M16 31L26 21" stroke="#fff" strokeWidth="2" /><path d="M29 17V25L22 20Z" fill="#fff" /></g>],
  ["Freeze", <g><path d="M12 2H28L17 13H0Z" fill={G} /><Flake x={23} y={22} r={8.5} /></g>],
  ["Turn Off", <g><path d="M12 2H28L17 13H0Z" fill={G} /><circle cx="23" cy="18" r="7" fill={T} stroke={P} strokeWidth="1" /><path d="M20 25H26V28L24 30H22L20 28Z" fill="#fff" /></g>],
  ["Lock", <g><path d="M12 2H28L17 13H0Z" fill={G} /><Lock x={17} y={12} /></g>],
  ["Unlock", <g><path d="M12 2H28L17 13H0Z" fill={G} /><Lock x={14} y={12} c={Y} open /></g>],
];

const Popout = () => (
  <Svg size="w-6 h-7" box="0 0 24 28"><path d="M9 9V2H22V26H9V19" stroke="#e4e4e4" strokeWidth="2" /><path d="M4 14H13" stroke="#e4e4e4" strokeWidth="2" /><path d="M0 14L6 9V19Z" fill="#e4e4e4" /></Svg>
);

const th = "h-11 border-r-2 border-[#2a2f39] bg-[#30343f] p-0 last:border-r-0";

function LayersPanel() {
  return (
    <section className="flex flex-col pl-5 pr-[19px]">
      <div className="flex h-[66px] items-start pr-0.5">
        <h2 className={`w-[106px] pt-1 text-[23px] leading-7 font-medium text-[#e6e7e9] ${inter}`}>Layers</h2>
        <div className="flex gap-4 pt-[11px]">
          {LAYER_TOOLS.map(([name, art]) => (
            <button key={name} aria-label={name}><Svg>{art}</Svg></button>
          ))}
        </div>
        <button aria-label="Detach Layers" className="ml-auto pt-[3px]"><Popout /></button>
      </div>
      <div className="flex flex-col gap-1.5 pl-0.5">
        <Select label="Current layer" value="0" height="h-[50px]" pad="pl-6">
          <span className="flex items-center gap-4 pl-5">
            <span className="size-4 rounded-full bg-[#dadada]" />
            <Svg size="size-5" box="-3 0 20 19"><Lock x={0} y={0} c="#6f7a8b" k="#4f5b6e" /></Svg>
            <Svg size="size-[18px]" box="-9 -9 18 18"><Flake x={0} y={0} c="#6f7a8b" /></Svg>
            <Swatch />
          </span>
        </Select>
        <Select label="Layer state" value="Unsaved Layer State" height="h-[50px]" />
      </div>
      <button className="flex h-14 items-center gap-[22px] pb-1 pl-2 text-[22px] font-medium text-[#c9cbcd]">
        <Caret className="w-[18px] h-[14px]" color="#8f9092" />
        Hide Layer List
      </button>
      <div className="h-[349px] border-2 border-[#2c323d] bg-[#4f5b6e]">
        <table className="w-full table-fixed border-collapse">
          <colgroup>
            <col className="w-[50px]" />
            <col />
            <col className="w-11" />
            <col className="w-11" />
            <col className="w-[94px]" />
            <col className="w-[94px]" />
            <col className="w-[44px]" />
          </colgroup>
          <thead>
            <tr>
              <th aria-label="Visible" className={th}>
                <Svg size="mx-auto w-6 h-5" box="0 0 24 20"><path d="M0 10C5 1 19 1 24 10C19 19 5 19 0 10Z" fill={G} /><circle cx="12" cy="10" r="5" fill="#30343f" /><circle cx="12" cy="10" r="2.600" fill={G} /></Svg>
              </th>
              <th className="relative border-r-2 border-[#2a2f39] bg-[#4f5b6e] p-0">
                <div className="flex h-11 items-center gap-3.5 pl-2 pr-3.5 text-[22px] text-[#e4e5e7]">
                  <Svg size="size-4" box="0 0 16 16"><rect x="1" y="1" width="14" height="14" stroke={G} strokeWidth="1.600" /><path d="M15 1V15H1Z" fill={G} /></Svg>
                  Name
                  <Svg size="ml-auto w-2.5 h-4" box="0 0 10 16"><path d="M5 0L10 6H0ZM5 16L10 10H0Z" fill={G} /></Svg>
                </div>
                <svg viewBox="0 0 12 9" className="absolute bottom-0 left-1/2 h-[9px] w-3 -translate-x-1/2" aria-hidden="true"><path d="M0 9L6 0L12 9Z" fill="#4a90e8" /></svg>
              </th>
              <th aria-label="Freeze" className={th}><Svg size="mx-auto size-[18px]" box="-9 -9 18 18"><Flake x={0} y={0} c={G} w={1.8} /></Svg></th>
              <th aria-label="Lock" className={th}><Svg size="mx-auto w-4 h-5" box="0 0 14 19"><Lock x={0} y={0} c={G} k="#30343f" /></Svg></th>
              <th aria-label="Lineweight" className={th}><Svg size="mx-auto size-[18px]" box="0 0 18 18"><path d="M0 3H18" stroke={G} strokeWidth="1.600" /><path d="M0 9H18" stroke={G} strokeWidth="2.500" /><path d="M0 15.500H18" stroke={G} strokeWidth="3.500" /></Svg></th>
              <th aria-label="Linetype" className={th}><Svg size="mx-auto size-[18px]" box="0 0 18 18"><path d="M0 3H18" stroke={G} strokeWidth="1.800" strokeDasharray="2 1.500" /><path d="M0 9H18" stroke={G} strokeWidth="1.800" strokeDasharray="5 1.500" /><path d="M0 15H18" stroke={G} strokeWidth="1.800" /></Svg></th>
              <th aria-label="Viewport freeze" className={th}><Svg size="mx-auto size-5" box="0 0 20 20"><path d="M4 17H1V3H16V5" stroke={G} strokeWidth="1.800" /><rect x="4" y="6" width="15" height="11" stroke={G} strokeWidth="1.800" /><rect x="8" y="9" width="7" height="5" stroke={G} strokeWidth="1.600" /></Svg></th>
            </tr>
          </thead>
          <tbody>
            <tr className="border-t-2 border-[#2c323d] bg-[#919eae] text-[22px] leading-[34px] text-white">
              <td className="p-0"><span className="mx-auto block size-4 rounded-full bg-[#dcdcdc]" /></td>
              <td className="p-0 pb-1"><span className="flex items-center gap-5"><Swatch />0</span></td>
              <td />
              <td />
              <td className="p-0 pb-1 pl-3">D...</td>
              <td className="p-0"><span className="ml-4 block h-0.5 w-16 bg-white" /></td>
              <td />
            </tr>
          </tbody>
        </table>
      </div>
      <div className="flex h-[49px] items-center pl-[14px] pr-[12px]">
        <div className="flex gap-7">
          <button aria-label="New layer"><Svg><g transform="translate(2 4)"><path d="M10 1H25L17 10H2Z" stroke={G} strokeWidth="1.800" /><path d="M24 8H26L18 18H1L3 16H17ZM24 14H26L18 24H1L3 22H17Z" fill="#b0b2b6" /></g></Svg></button>
          <button aria-label="Layer filters"><Svg><path d="M9 2H22L16 9H3Z" stroke={G} strokeWidth="1.800" /><path d="M0 14L2 12H14V14ZM0 20L2 18H11V20Z" fill="#9a9da3" /><rect x="13" y="15" width="18" height="14" stroke="#e8e8e8" strokeWidth="2" /><path d="M17 20H19M21 20H27M17 24H19M21 24H27" stroke="#e8e8e8" strokeWidth="1.800" /></Svg></button>
          <button aria-label="New group"><Svg><path d="M3 7H12L14 10H24V13H9L4 24H3Z" fill={G} /><path d="M11 14H30L24 27H4Z" fill={G} /></Svg></button>
          <button aria-label="New dynamic group"><Svg><path d="M3 7H12L14 10H24V13H9L4 24H3Z" fill={G} /><path d="M11 14H30L24 27H4Z" fill={G} /><path d="M19 14L12 21H16L14 27L22 20H18Z" fill={P} /></Svg></button>
        </div>
        <button aria-label="Delete layer" className="ml-auto mr-8"><span className="block h-1 w-4 bg-[#7f858f]" /></button>
        <button aria-label="Columns" className="flex items-center gap-1.5">
          <Svg size="w-[22px] h-4" box="0 0 22 16"><path d="M1 1H21V15H1ZM7.500 1V15M14.500 1V15" stroke={G} strokeWidth="2" /></Svg>
          <Caret className="w-[10px] h-[6px]" />
        </button>
      </div>
      <label className="mx-0.5 flex h-[41px] items-center gap-2.5 rounded-md bg-white pt-0.5 pl-3">
        <Svg size="w-8 h-6" box="0 0 32 24"><circle cx="10" cy="10" r="8.500" stroke="#5c5c5c" strokeWidth="1.800" /><path d="M16 16L23 23M24 8L28 12L32 8" stroke="#5c5c5c" strokeWidth="1.800" /></Svg>
        <input aria-label="Search for layer" placeholder="Search for layer" className={`min-w-0 flex-1 bg-transparent text-[24px] text-gray-800 outline-none placeholder:text-[#c2c3c5] ${inter}`} />
      </label>
    </section>
  );
}

function Row({ id, label, children }) {
  return (
    <div className="flex h-[38px] items-center gap-[19px]">
      <label htmlFor={id} className="w-[308px] shrink-0 pb-1 text-right font-medium text-[#cbcdcf]">{label}</label>
      <div className="flex min-w-0 flex-1 items-center">{children}</div>
    </div>
  );
}

function TextField({ id, value, disabled }) {
  return (
    <input
      id={id}
      defaultValue={value}
      disabled={disabled}
      className={`h-[38px] w-full min-w-0 flex-1 rounded border-2 pb-0.5 pl-1.5 font-medium outline-none ${disabled ? "border-[#3a4549] bg-[#444d5e] text-[#8a909b]" : "border-[#2d3a3d] bg-[#4f5b6e] text-white"}`}
    />
  );
}

function PropertiesPanel() {
  return (
    <section className="mt-[18px] flex min-h-0 flex-1 flex-col border-t-2 border-[#262c36]">
      <div className="flex h-[50px] items-start pl-5 pr-[18px]">
        <h2 className={`pt-1 text-[23px] leading-7 font-medium text-[#e6e7e9] ${inter}`}>Properties</h2>
        <div className={`ml-auto flex border-x-2 border-b-2 border-[#2c323d] text-[18px] ${inter}`}>
          <button className="h-[25px] w-[56px] bg-[#3f4756] leading-6 text-[#868b94]">All</button>
          <button className="h-[25px] w-[62px] border-l-2 border-[#2c323d] bg-[#4f5b6e] leading-6 font-semibold text-[#e8e9eb]">My</button>
        </div>
        <button aria-label="Edit properties" className="ml-5">
          <Svg size="w-7 h-[27px]" box="0 0 28 27"><path d="M9 23H1V1H19V8" stroke={G} strokeWidth="2" /><path d="M4 6H16M4 10H14M4 15H12" stroke={G} strokeWidth="2" /><path d="M20 9L28 16L18 26H11V19Z" fill={G} /><path d="M13 20L17 25" stroke={P} strokeWidth="1.500" /></Svg>
        </button>
        <button aria-label="Detach Properties" className="ml-5"><Popout /></button>
      </div>
      <div className="px-[22px]">
        <Select label="Selection" value="Model Space" height="h-11" disabled />
      </div>
      <div className="mt-3.5 flex flex-col gap-2 pr-7 text-[22px]">
        <Row id="color" label="Color">
          <Select id="color" value="ByLayer" pad="pl-5"><span className="pl-4"><Swatch /></span></Select>
        </Row>
        <Row id="layer" label="Layer"><Select id="layer" value="0" pad="pl-2.5" /></Row>
        <Row id="linetype" label="Linetype">
          <Select id="linetype" value="ByLayer" pad="pl-7"><span className="ml-3.5 h-0.5 w-16 bg-white" /></Select>
        </Row>
        <Row id="ltscale" label="Linetype scale"><TextField id="ltscale" value="1.000" /></Row>
        <Row id="lineweight" label="Lineweight"><Select id="lineweight" value="ByLayer" pad="pl-2.5" /></Row>
        <Row id="transparency" label="Transparency">
          <div className="relative ml-1 h-[34px] flex-1 border-2 border-[#2d3a3d] bg-[#4f5b6e]">
            <input id="transparency" defaultValue="0" className="size-full bg-transparent pr-1 pb-0.5 text-right font-medium text-white outline-none" />
            <span className="pointer-events-none absolute bottom-1 left-1/2 h-3 w-px bg-[#8c95a3]" />
            <span className="pointer-events-none absolute inset-y-0.5 left-0 flex flex-col justify-between">
              <span className="h-1.5 w-[3px] bg-[#5fa0f0]" />
              <span className="h-1.5 w-[3px] bg-[#5fa0f0]" />
            </span>
          </div>
          <button aria-label="Transparency by layer" className={`ml-[7px] flex h-[38px] w-[77px] items-center justify-center gap-3.5 ${field}`}>
            <Svg size="w-7 h-6" box="-1 -1 29 25"><Stack top={F} /></Svg>
            <Caret />
          </button>
        </Row>
        {[["Text style", "Standard"], ["Dimension style", "Standard"], ["Multileader style", "Standard"], ["Table style", "Standard"], ["Annotation scale", "1:1"]].map(([l, v]) => (
          <Row key={l} id={l} label={l}><Select id={l} value={v} pad="pl-2.5" /></Row>
        ))}
        <Row id="theight" label="Text height">
          <TextField id="theight" value="0.200" />
          <button aria-label="Pick text height" className="ml-[5px] h-9 w-10 rounded border-2 border-[#2d3a3d]">
            <Svg size="w-9 h-8" box="0 0 36 32"><path d="M3 0V28M32 0V12" stroke={G} strokeWidth="2" /><path d="M9 5H27" stroke={B} strokeWidth="2" /><path d="M6 5L11 1V9ZM30 5L25 1V9Z" fill={B} /><path d="M26 14V32M17 23H35" stroke={G} strokeWidth="2" /><rect x="22" y="19" width="8" height="8" stroke={G} strokeWidth="1.600" /></Svg>
          </button>
        </Row>
        <Row id="pstyle" label="Plot style"><Select id="pstyle" value="ByColor" pad="pl-2.5" /></Row>
        <Row id="ptable" label="Plot style table"><Select id="ptable" value="None" pad="pl-2.5" /></Row>
        <Row id="pattached" label="Plot style attached to"><TextField id="pattached" value="Model" disabled /></Row>
        <Row id="ptype" label="Plot table type"><TextField id="ptype" value="Not available" disabled /></Row>
      </div>
    </section>
  );
}

function RightPanel() {
  const off = "flex h-11 w-[103px] items-center justify-center bg-[#2f333f]";
  return (
    <aside className={`flex w-[668px] shrink-0 flex-col bg-[#3c4453] ${sans}`}>
      <div className="flex h-[46px] shrink-0 gap-0.5 bg-[#222831]">
        <button aria-label="Layers" className="flex w-[103px] items-center justify-center bg-[#3c4453]">
          <Svg><Stack x={1} y={2} /><circle cx="25" cy="23" r="8.500" fill={P} /><circle cx="25" cy="23" r="7" fill={G} /><path d="M25 18V20M25 21.500V27" stroke={P} strokeWidth="2" /></Svg>
        </button>
        <button aria-label="References" className={off}>
          <Svg><path d="M1 12H14V6H24V13H31V28H1Z" fill={G} /><path d="M26 6L31 11H26Z" fill="#f5f5f5" /><Clip c={G} bg="#2f333f" /></Svg>
        </button>
        <button aria-label="Sheets" className={off}>
          <Svg><rect x="2" y="3" width="28" height="26" fill="#dcdcdc" /><rect x="2" y="3" width="28" height="6" fill="#9b9da2" /><rect x="4" y="5" width="3" height="2" fill={P} /><path d="M6 11H11V16H6ZM14 11H19V16H14ZM22 11H27V16H22ZM6 18H11V23H6ZM14 18H19V23H14ZM22 18H27V23H22Z" fill="#5f636d" /><path d="M6 26H26" stroke="#888" strokeWidth="2" /></Svg>
        </button>
        <div className="h-11 flex-1 bg-[#2f333f]" />
        <button aria-label="More palettes" className="flex h-11 w-12 items-center justify-center bg-[#3c4453]">
          <Svg size="size-4" box="0 0 16 16"><path d="M2 3L7 8L2 13M9 3L14 8L9 13" stroke="#a9abb0" strokeWidth="1.500" /></Svg>
        </button>
      </div>
      <LayersPanel />
      <PropertiesPanel />
    </aside>
  );
}

/* ---------- status bar ---------- */

const Person = () => <path d="M16 2C19 7 20 12 21 19L29 30L23 29L16 24L9 29L3 30L11 19C12 12 13 7 16 2Z" fill="#e2e2e2" />;

const W = "#f5f5f5";
const STATUS = [
  ["Grid", 1, <path d="M8 1V31M16 1V31M24 1V31M1 8H31M1 16H31M1 24H31" stroke={W} strokeWidth="2" />],
  ["Snap", 0, <Sq p={[[5, 5], [16, 5], [27, 5], [5, 16], [16, 16], [27, 16], [5, 27], [16, 27], [27, 27]]} c={W} />],
  ["Ortho", 0, <path d="M1 1V31H31M1 21H11V31" stroke={G} strokeWidth="2" />],
  ["Polar", 0, <g stroke={G} strokeWidth="2"><circle cx="14" cy="18" r="12" /><path d="M14 18H32M14 18L27 3" /></g>],
  ["Dynamic Input", 0, <g><path d="M7 4V18M0 11H14" stroke={G} strokeWidth="2" /><rect x="12" y="20" width="20" height="9" fill={G} /><path d="M15 22V27" stroke={P} strokeWidth="2" /></g>],
  ["Lineweight", 0, <g fill={G}><path d="M0 2H32V4H0ZM0 11H18V17H0ZM18 11H32V13H18ZM0 21H14V28H0ZM14 21H32V23H14Z" /></g>],
  ["Transparency", 1, <g><rect x="3" y="2" width="27" height="28" stroke={W} strokeWidth="2" /><g fill={W}>{[0, 1, 2, 3, 4, 5].map((r) => [0, 1, 2].map((c) => <rect key={`${r}${c}`} x={6 + c * 7 + (r % 2) * 3.5} y={5 + r * 3.7} width="3.500" height="3.700" />))}</g></g>],
  ["Selection Cycling", 1, <g stroke={W} strokeWidth="2"><path d="M6 1H2V31H6M18 1H22V14" /><rect x="8" y="5" width="8" height="7" /><circle cx="11" cy="20" r="4" /><path d="M17 14L29 26L24 27L26 31L23 32L21 28L17 31Z" fill={W} stroke="none" /></g>],
  ["Object Snap", 1, <g><path d="M26 3L4 28H31" stroke={W} strokeWidth="2" /><Sq p={[[16, 14]]} s={6} c={W} /></g>],
  ["Object Snap Tracking", 1, <g stroke={W} strokeWidth="2"><path d="M12 5H31V31H4V12" /><rect x="1" y="1" width="8" height="9" /></g>],
  ["Annotation Visibility", 1, <g><Person /><circle cx="25" cy="7" r="6" fill="#fff" /></g>],
  ["Auto Annotation", 0, <g><Person /><path d="M24 0L20 9H25L22 16L31 6H27L29 0Z" fill={Y} /></g>],
  ["Annotation Scale", 0, <Person />],
];

function StatusBar() {
  return (
    <footer className={`flex h-11 shrink-0 gap-0.5 text-[22px] ${sans}`}>
      <button className="w-[115px] bg-[#4e5a6f] font-semibold text-white">Model</button>
      <button aria-label="New layout" className="flex w-[46px] items-center justify-center bg-[#3c4453]"><Svg><path d="M16 5V27M5 16H27" stroke={G} strokeWidth="2" /></Svg></button>
      <button className="w-[115px] bg-[#3c4453] text-[#aeb1b7]">Layout1</button>
      <button className="w-[115px] bg-[#3c4453] text-[#aeb1b7]">Layout2</button>
      <div className="flex-1 bg-[#3c4453]" />
      <div className="flex items-center bg-[#3c4453] pl-[21px] pr-[13px] text-[#c0c2c6]">
        <output className="mr-2 flex gap-2 text-[24px] whitespace-pre"><span>1.392,</span><span>{" "}0.124</span><span>, 0.000</span></output>
        <div className="flex gap-1">
          {STATUS.map(([name, on, art]) => (
            <button key={name} aria-label={name} aria-pressed={!!on} className={`flex size-10 items-center justify-center ${on ? "bg-[#698fbe]" : ""}`}><Svg>{art}</Svg></button>
          ))}
        </div>
        <button className="ml-1 flex items-center gap-2.5 text-[22px]">1:1<Caret color="#d0d0d0" className="w-3 h-2" /></button>
        <button aria-label="Isolate objects" className="ml-4"><Svg><g stroke={G} strokeWidth="2"><rect x="1" y="2" width="11" height="12" /><circle cx="24" cy="15" r="6" /><path d="M12 20L18 31H6Z" /></g></Svg></button>
        <button aria-label="Customize" className="ml-3"><Gear size="size-8" color="#dcdcdc" /></button>
      </div>
    </footer>
  );
}

export default function App() {
  return (
    <div className="flex h-screen w-full flex-col gap-0.5 overflow-hidden bg-[#222831]">
      <TopBar />
      <div className="flex min-h-0 flex-1 gap-0.5">
        <Sidebar />
        <div className="flex min-w-0 flex-1 flex-col gap-0.5 pb-0.5">
          <div className="flex min-h-0 flex-1 gap-0.5">
            <div className="flex min-w-0 flex-1 flex-col">
              <DocTabs />
              <Canvas />
            </div>
            <RightPanel />
          </div>
          <StatusBar />
        </div>
      </div>
    </div>
  );
}
